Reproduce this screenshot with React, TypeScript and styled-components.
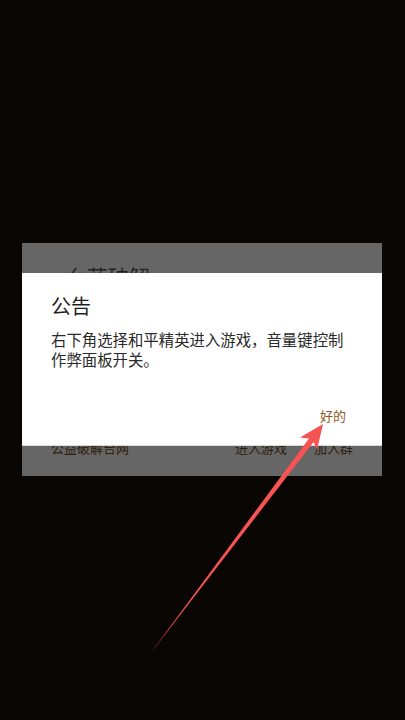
import React from "react";
import styled, { createGlobalStyle } from "styled-components";

const GlobalStyle = createGlobalStyle`
  html, body {
    margin: 0;
    padding: 0;
    background: #0a0603;
  }
  body {
    font-family: "Noto Sans CJK SC", "Noto Sans", sans-serif;
  }
`;

const Screen = styled.div`
  position: relative;
  width: 405px;
  height: 720px;
  overflow: hidden;
  background: #0a0603;
  padding-top: 243px;
  box-sizing: border-box;
`;

const BackPanel = styled.div`
  position: relative;
  margin-left: 22px;
  width: 360px;
  height: 233px;
  background: #666666;
  display: flex;
  flex-direction: column;
  justify-content: space-between;
  box-sizing: border-box;
  padding: 21px 29px 20px 29px;
`;

const BackTitle = styled.div`
  font-size: 21px;
  line-height: 24px;
  color: #222;
  padding-left: 2px;
`;

const BackActions = styled.div`
  display: flex;
  align-items: center;
  font-size: 13px;
  line-height: 16px;
  color: #2e1e10;
`;

const BackLink = styled.span<{ $grow?: boolean; $gap?: number }>`
  flex: ${(p) => (p.$grow ? 1 : "none")};
  margin-left: ${(p) => p.$gap ?? 0}px;
`;

const Dialog = styled.div`
  position: absolute;
  top: 30px;
  left: 0;
  width: 360px;
  height: 173px;
  background: #ffffff;
  border-bottom: 1px solid #d9d9d9;
  box-sizing: border-box;
  padding: 19px 31px 0 29px;
  display: flex;
  flex-direction: column;
`;

const DialogTitle = styled.div`
  font-size: 20px;
  line-height: 28px;
  color: #1e1e1e;
`;

const DialogBody = styled.div`
  margin-top: 9px;
  font-size: 15.4px;
  line-height: 20px;
  color: #2a2a2a;
`;

const DialogFooter = styled.div`
  margin-top: auto;
  margin-bottom: 21px;
  display: flex;
  justify-content: flex-end;
  padding-right: 5px;
`;

const OkButton = styled.span`
  font-size: 13px;
  line-height: 16px;
  color: #8a5a24;
`;

const ArrowLayer = styled.svg`
  position: absolute;
  left: 0;
  top: 0;
  pointer-events: none;
`;

export default function App() {
  return (
    <>
      <GlobalStyle />
      <Screen>
        <BackPanel>
          <BackTitle>o么蓝破解</BackTitle>
          <BackActions>
            <BackLink $grow>公益破解合网</BackLink>
            <BackLink>进入游戏</BackLink>
            <BackLink $gap={27}>加入群</BackLink>
          </BackActions>
          <Dialog>
            <DialogTitle>公告</DialogTitle>
            <DialogBody>
              右下角选择和平精英进入游戏，音量键控制作弊面板开关。
            </DialogBody>
            <DialogFooter>
              <OkButton>好的</OkButton>
            </DialogFooter>
          </Dialog>
        </BackPanel>
        <ArrowLayer width="405" height="720" viewBox="0 0 405 720">
          <polygon
            points="150,654 313.6,442 317,450 323,424 300,437.5 309,438.5"
            fill="#f65353"
          />
        </ArrowLayer>
      </Screen>
    </>
  );
}
